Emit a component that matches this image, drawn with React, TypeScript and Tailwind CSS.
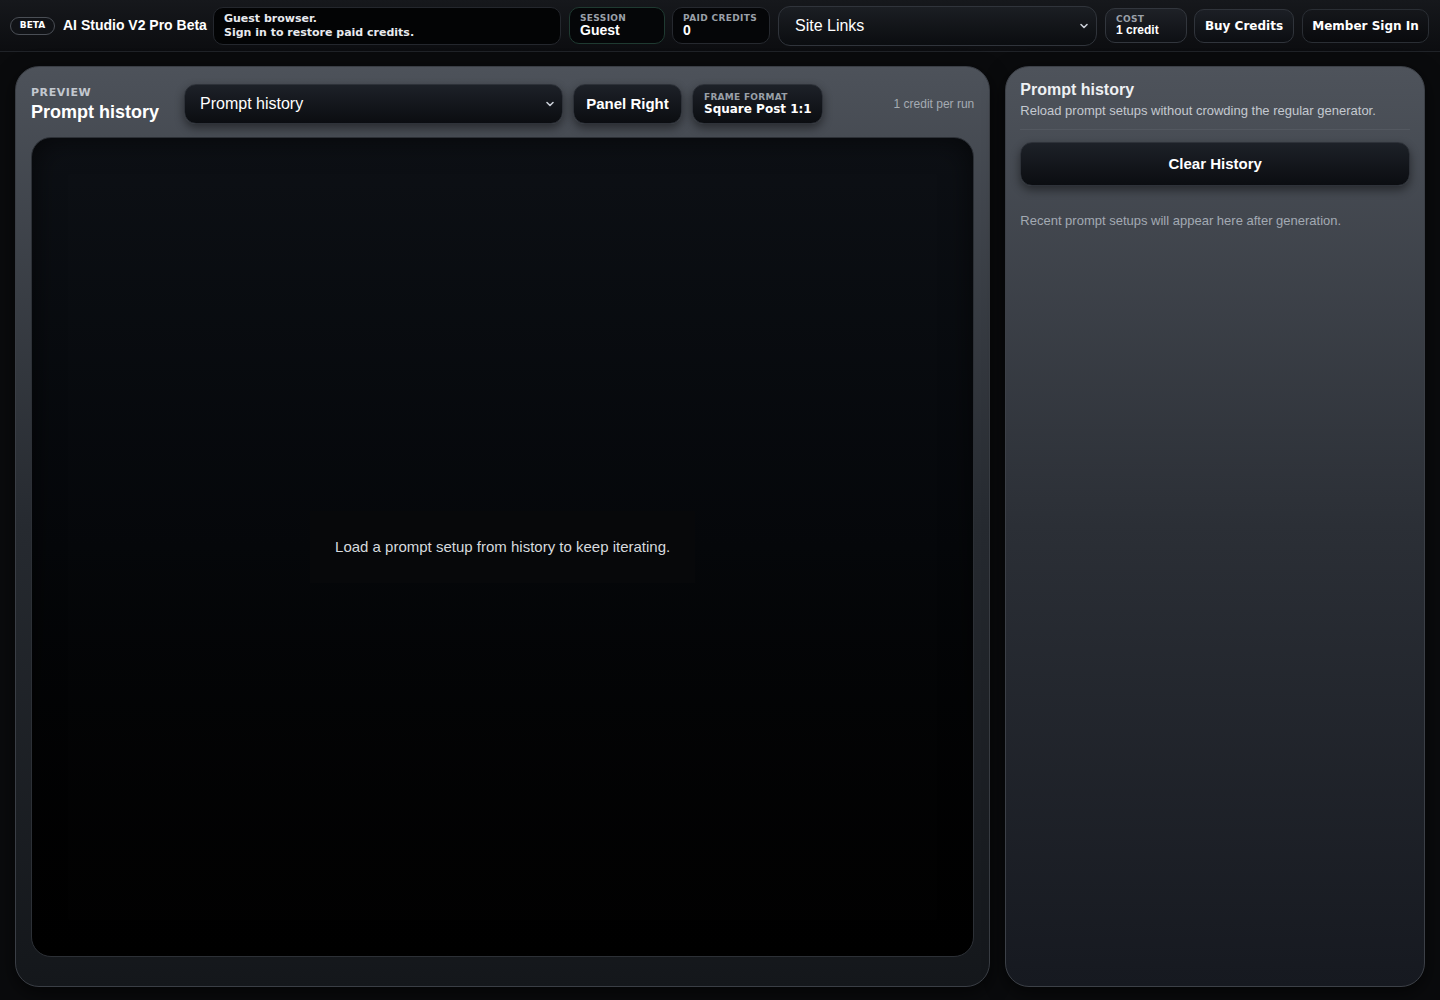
import React from 'react'

const sans = "font-['Liberation_Sans',Arial,sans-serif]"
const wide = "font-['DejaVu_Sans',Verdana,sans-serif]"

const darkBtn =
  'rounded-xl border border-[#2e3239] bg-gradient-to-b from-[#1d2128] to-[#0b0d11] shadow-[0_4px_10px_rgba(0,0,0,0.45)]'

const Chevron = () => (
  <svg width="12" height="12" viewBox="0 0 12 12" className="shrink-0">
    <path d="M3 4.5 L6 7.5 L9 4.5" fill="none" stroke="#c9ced6" strokeWidth="1.6" strokeLinecap="round" strokeLinejoin="round" />
  </svg>
)

const StatBox = ({ label, value, className }: { label: string; value: string; className: string }) => (
  <div className={`flex h-[37px] shrink-0 flex-col justify-center whitespace-nowrap rounded-[10px] border bg-[#050608] px-[10px] ${className}`}>
    <span className={`${wide} text-[9px] font-bold leading-[10px] tracking-[0.04em] text-[#9aa0a8]`}>{label}</span>
    <span className={`${sans} text-[14px] font-bold leading-[15px] text-white`}>{value}</span>
  </div>
)

const Header = () => (
  <header className="flex h-[52px] items-center gap-2 whitespace-nowrap border-b border-[#202328] bg-gradient-to-b from-[#16181c] to-[#0c0d10] px-[10px]">
    <span className={`${wide} flex h-[18px] w-[45px] shrink-0 items-center justify-center rounded-full border border-[#4a4e55] bg-[#111317] text-[9px] font-bold text-white`}>
      BETA
    </span>
    <span className={`${sans} w-[142px] shrink-0 text-[14px] font-bold text-white`}>AI Studio V2 Pro Beta</span>
    <div className={`${wide} flex h-[38px] w-[348px] shrink-0 flex-col justify-center rounded-[10px] border border-[#24272d] bg-[#030405] px-[10px] text-[11px] font-bold leading-[14px] text-[#e8eaee]`}>
      <span>Guest browser.</span>
      <span>Sign in to restore paid credits.</span>
    </div>
    <StatBox label="SESSION" value="Guest" className="w-[96px] border-[#1f3a31]" />
    <StatBox label="PAID CREDITS" value="0" className="-ml-px w-[98px] border-[#26292f]" />
    <div className={`${sans} flex h-[40px] w-[319px] shrink-0 items-center justify-between rounded-xl border border-[#30343b] bg-gradient-to-b from-[#1b1e23] to-[#0b0d10] pl-[16px] pr-[6px] text-[16px] text-white`}>
      <span>Site Links</span>
      <Chevron />
    </div>
    <div className="flex h-[35px] w-[82px] shrink-0 flex-col justify-center rounded-[10px] border border-[#32363d] bg-gradient-to-b from-[#1e2127] to-[#0e1014] px-[10px]">
      <span className={`${wide} text-[9px] font-bold leading-[10px] tracking-[0.04em] text-[#9aa0a8]`}>COST</span>
      <span className={`${sans} text-[12px] font-bold leading-[13px] text-white`}>1 credit</span>
    </div>
    <button className={`${wide} -ml-px h-[34px] w-[100px] shrink-0 rounded-[10px] border border-[#30343b] bg-gradient-to-b from-[#1c1f25] to-[#0c0e12] text-[12px] font-bold text-white`}>
      Buy Credits
    </button>
    <button className={`${wide} h-[34px] w-[127px] shrink-0 rounded-[10px] border border-[#2a2e34] bg-gradient-to-b from-[#15171b] to-[#090a0d] text-[12px] font-bold text-white`}>
      Member Sign In
    </button>
  </header>
)

const PreviewPanel = () => (
  <section className="flex h-[921px] w-[976px] flex-col rounded-[24px] border border-[#3a3e45] bg-gradient-to-b from-[#4d525a] via-[#262a30] to-[#14171b] px-[15px] pb-[29px] pt-[17px] shadow-[0_6px_20px_rgba(0,0,0,0.6)]">
    <div className="flex h-[40px] items-center whitespace-nowrap">
      <div className="flex w-[153px] shrink-0 flex-col">
        <span className={`${wide} text-[11px] font-bold leading-[12px] tracking-[0.05em] text-[#c3c8cf]`}>PREVIEW</span>
        <span className={`${sans} mt-[3px] text-[18px] font-bold leading-[20px] text-white`}>Prompt history</span>
      </div>
      <div className={`${darkBtn} ${sans} flex h-[40px] w-[379px] shrink-0 items-center justify-between pl-[15px] pr-[6px] text-[16px] text-white`}>
        <span>Prompt history</span>
        <Chevron />
      </div>
      <button className={`${darkBtn} ${sans} ml-[10px] h-[40px] w-[109px] shrink-0 text-[15px] font-bold text-white`}>Panel Right</button>
      <div className={`${darkBtn} ml-[10px] flex h-[40px] w-[131px] shrink-0 flex-col justify-center px-[11px]`}>
        <span className={`${wide} text-[9px] font-bold leading-[10px] tracking-[0.03em] text-[#9aa0a8]`}>FRAME FORMAT</span>
        <span className={`${wide} text-[12px] font-bold leading-[15px] text-white`}>Square Post 1:1</span>
      </div>
      <span className={`${sans} ml-auto text-[12px] text-[#a5abb3]`}>1 credit per run</span>
    </div>
    <div className="mt-[13px] flex flex-1 items-center justify-center rounded-[20px] border border-[#2c3036] bg-gradient-to-b from-[#0d1015] via-[#05070a] to-[#010101] shadow-[inset_0_0_30px_rgba(0,0,0,0.6)]">
      <div className={`${sans} flex h-[72px] w-[385px] items-center justify-center bg-[#07080a] text-[15px] text-[#d6dade]`}>
        Load a prompt setup from history to keep iterating.
      </div>
    </div>
  </section>
)

const HistoryPanel = () => (
  <aside className="flex h-[921px] w-[420px] flex-col rounded-[24px] border border-[#3c4047] bg-gradient-to-b from-[#4e535b] via-[#2b2f36] to-[#161920] px-[14px] pt-[13px] shadow-[0_6px_20px_rgba(0,0,0,0.6)]">
    <h2 className={`${sans} text-[16px] font-bold leading-[20px] text-[#eef0f3]`}>Prompt history</h2>
    <p className={`${sans} mt-[3px] text-[13px] leading-[16px] text-[#c4c9d0]`}>
      Reload prompt setups without crowding the regular generator.
    </p>
    <div className="mt-[10px] h-px w-full bg-[#5a5f67]/60" />
    <button className={`${darkBtn} ${sans} mt-[12px] h-[44px] w-full text-[15px] font-bold text-white`}>Clear History</button>
    <p className={`${sans} mt-[25px] text-[13px] text-[#a3aab3]`}>
      Recent prompt setups will appear here after generation.
    </p>
  </aside>
)

export default function App() {
  return (
    <div className="h-[1000px] w-[1440px] overflow-hidden bg-[#0a0b0d]">
      <Header />
      <main className="flex gap-[15px] px-[15px] pt-[14px]">
        <PreviewPanel />
        <HistoryPanel />
      </main>
    </div>
  )
}
